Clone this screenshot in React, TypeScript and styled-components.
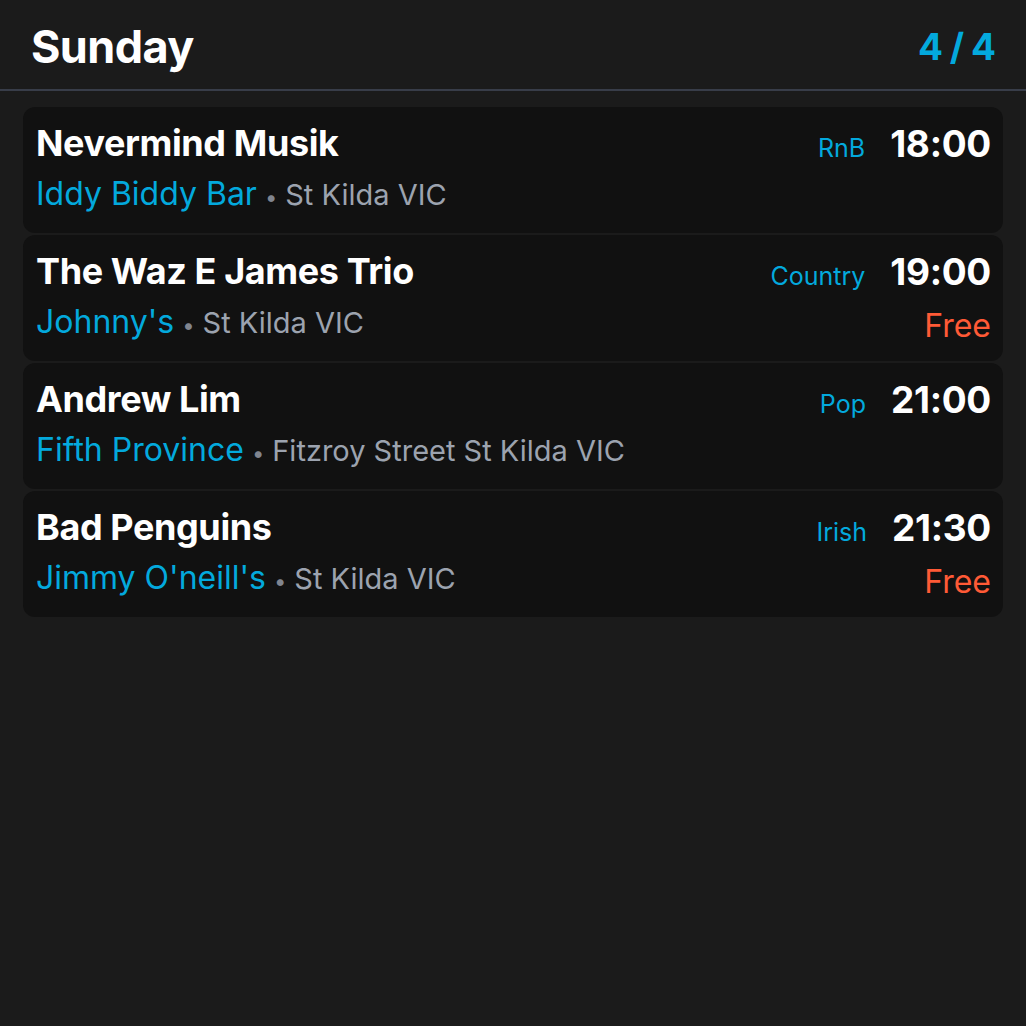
import React from 'react'
import styled, { createGlobalStyle } from 'styled-components'

const GlobalStyle = createGlobalStyle`
  html, body {
    margin: 0;
    padding: 0;
    background: #1b1b1b;
  }
  body {
    font-family: Inter, "Noto Sans", "Liberation Sans", sans-serif;
    color: #fff;
  }
`

const BLUE = '#03a9dd'
const GREY = '#9ca3af'
const ORANGE = '#ff5a36'

const Page = styled.div`
  min-height: 1026px;
  background: #1b1b1b;
`

const Header = styled.header`
  height: 91px;
  box-sizing: border-box;
  display: flex;
  align-items: center;
  justify-content: space-between;
  padding: 4px 31px 0;
  border-bottom: 2px solid #383d49;
`

const DayTitle = styled.h1`
  margin: 0;
  font-size: 45px;
  font-weight: 700;
  letter-spacing: -0.6px;
  color: #fff;
`

const Counter = styled.span`
  font-size: 37px;
  font-weight: 700;
  letter-spacing: -1px;
  color: ${BLUE};
`

const List = styled.div`
  display: flex;
  flex-direction: column;
  gap: 2px;
  padding: 16px 23px;
`

const Card = styled.div`
  background: #111111;
  border-radius: 12px;
  min-height: 126px;
  box-sizing: border-box;
  padding: 12px 12px 0 13px;
  display: flex;
  justify-content: space-between;
`

const Main = styled.div`
  display: flex;
  flex-direction: column;
  min-width: 0;
`

const Act = styled.div`
  font-size: 36px;
  line-height: 48px;
  font-weight: 700;
  letter-spacing: -0.4px;
`

const Where = styled.div`
  display: flex;
  align-items: baseline;
  line-height: 54px;
  white-space: nowrap;
`

const Venue = styled.span`
  font-size: 32px;
  color: ${BLUE};
`

const Dot = styled.span`
  font-size: 22px;
  color: #80858f;
  margin: 0 8px;
`

const Address = styled.span`
  font-size: 29px;
  color: ${GREY};
`

const Side = styled.div`
  display: flex;
  flex-direction: column;
  align-items: flex-end;
`

const TimeRow = styled.div`
  display: flex;
  align-items: baseline;
  gap: 25px;
  line-height: 50px;
`

const Genre = styled.span`
  font-size: 25px;
  color: ${BLUE};
`

const Time = styled.span`
  font-size: 37px;
  font-weight: 700;
  letter-spacing: -0.3px;
  color: #fff;
`

const Price = styled.span`
  font-size: 32px;
  line-height: 44px;
  margin-top: 3px;
  color: ${ORANGE};
`

type Gig = {
  act: string
  venue: string
  address: string
  genre: string
  time: string
  free?: boolean
}

const gigs: Gig[] = [
  { act: 'Nevermind Musik', venue: 'Iddy Biddy Bar', address: 'St Kilda VIC', genre: 'RnB', time: '18:00' },
  { act: 'The Waz E James Trio', venue: "Johnny's", address: 'St Kilda VIC', genre: 'Country', time: '19:00', free: true },
  { act: 'Andrew Lim', venue: 'Fifth Province', address: 'Fitzroy Street St Kilda VIC', genre: 'Pop', time: '21:00' },
  { act: 'Bad Penguins', venue: "Jimmy O'neill's", address: 'St Kilda VIC', genre: 'Irish', time: '21:30', free: true },
]

export default function App() {
  return (
    <Page>
      <GlobalStyle />
      <Header>
        <DayTitle>Sunday</DayTitle>
        <Counter>4 / 4</Counter>
      </Header>
      <List>
        {gigs.map((g) => (
          <Card key={g.act}>
            <Main>
              <Act>{g.act}</Act>
              <Where>
                <Venue>{g.venue}</Venue>
                <Dot>•</Dot>
                <Address>{g.address}</Address>
              </Where>
            </Main>
            <Side>
              <TimeRow>
                <Genre>{g.genre}</Genre>
                <Time>{g.time}</Time>
              </TimeRow>
              {g.free && <Price>Free</Price>}
            </Side>
          </Card>
        ))}
      </List>
    </Page>
  )
}
